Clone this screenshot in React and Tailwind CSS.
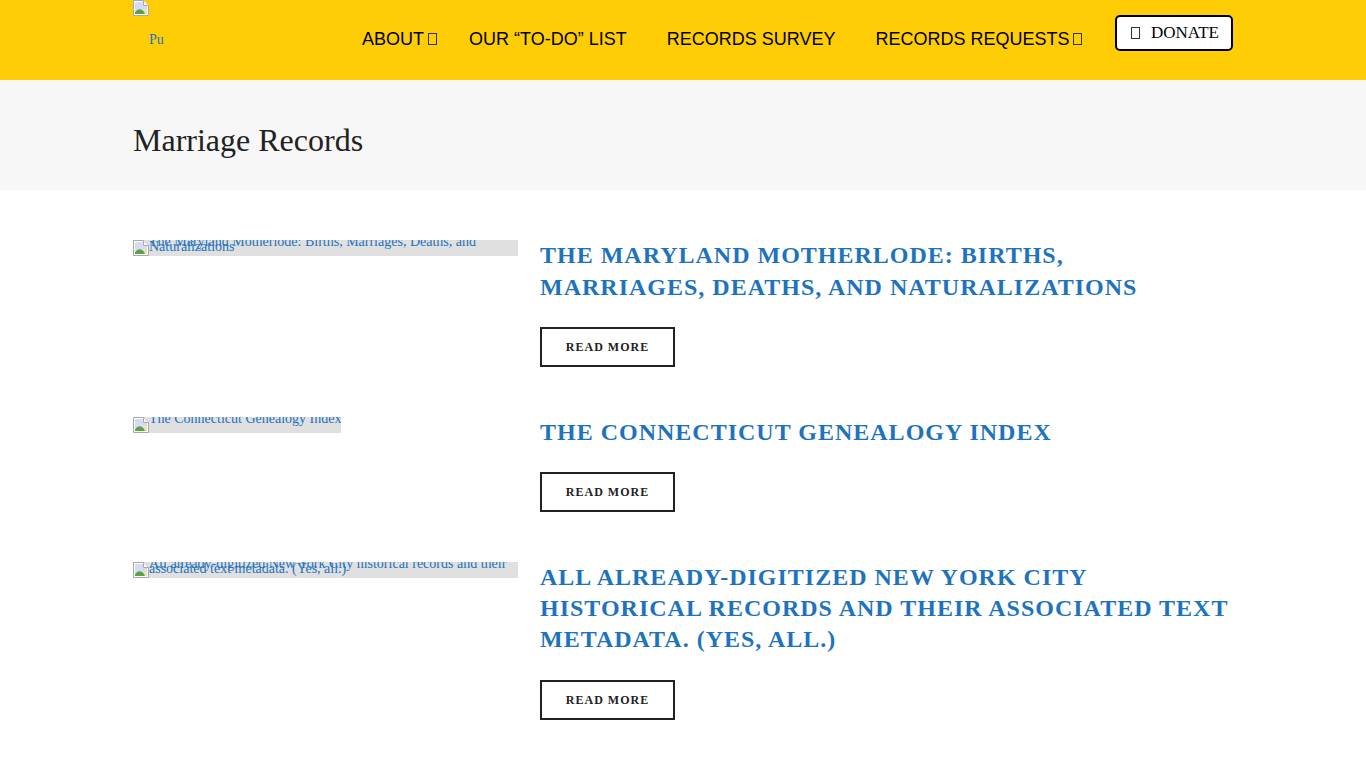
import React from 'react';

const serif = "font-['Liberation_Serif',serif]";
const sans = "font-['Liberation_Sans',Arial,sans-serif]";

function BrokenImage() {
  return (
    <svg width="16" height="16" viewBox="0 0 16 16" className="shrink-0 block">
      <path d="M0.5 0.5H10.5L15.5 5.5V15.5H0.5Z" fill="#ffffff" stroke="#a8a8a8" />
      <path d="M2 2H10V6H14V14H2Z" fill="#d6daf4" />
      <path d="M10.5 0.5V5.5H15.5" fill="#ffffff" stroke="#a8a8a8" />
      <path d="M7 14C8 10 11 8 14 9V14Z" fill="#e9e6b4" />
      <path d="M2 14V12.5C4 9.5 7 8.5 9 10C10.5 11 11.5 12.5 12 14Z" fill="#58a445" />
    </svg>
  );
}

// icon font glyph that never loaded, shows as an empty box
function MissingGlyph({ className }) {
  return <span className={`inline-block w-[9px] h-[12px] border border-[#333333] ${className}`} />;
}

function NavItem({ label, caret, className }) {
  return (
    <a className={`flex items-center text-[18px] leading-[26px] text-black whitespace-nowrap ${sans} ${className}`}>
      {label}
      {caret && <MissingGlyph className="ml-1" />}
    </a>
  );
}

function Post({ title, alt, imgWidth, altClass = '' }) {
  return (
    <div className="flex items-start mb-[50px]">
      <div className="w-[385px] shrink-0 mr-[22px]">
        <div className={`flex h-4 overflow-hidden bg-[#e0e0e0] ${imgWidth}`}>
          <BrokenImage />
          <span className={`-mt-px text-[14px] leading-[5px] text-[#1e73be] ${serif} ${altClass}`}>{alt}</span>
        </div>
      </div>
      <div className="flex-1">
        <h2 className={`text-[24px] leading-[31.2px] font-bold uppercase tracking-[1px] text-[#1e73be] mb-6 ${serif}`}>{title}</h2>
        <a className={`flex items-center justify-center w-[135px] h-10 border-2 border-[#222222] text-[12px] font-bold uppercase tracking-[1px] text-[#222222] ${serif}`}>
          Read more
        </a>
      </div>
    </div>
  );
}

export default function App() {
  return (
    <div className="bg-white">
      <header className="h-20 bg-[#ffcd05]">
        <div className="w-[1100px] mx-auto h-full flex items-start">
          <div className="w-[229px] shrink-0">
            <BrokenImage />
            <div className={`pl-4 mt-[15px] text-[14px] leading-[17px] text-[#1e73be] ${serif}`}>Pu</div>
          </div>
          <nav className="flex items-start pt-[26px]">
            <NavItem label="ABOUT" caret className="mr-8" />
            <NavItem label="OUR “TO-DO” LIST" className="mr-10" />
            <NavItem label="RECORDS SURVEY" className="mr-10" />
            <NavItem label="RECORDS REQUESTS" caret className="mr-8" />
          </nav>
          <a className={`ml-auto mt-[15px] flex items-center h-9 w-[118px] pl-[14px] bg-white border-2 border-black rounded-[5px] text-[17px] text-black ${serif}`}>
            <MissingGlyph className="mr-[11px]" />
            DONATE
          </a>
        </div>
      </header>

      <div className="h-[110.3px] bg-[#f7f7f7] flex items-center">
        <h1 className={`w-[1100px] mx-auto pt-[10px] text-[32px] leading-[40px] text-[#222222] ${serif}`}>Marriage Records</h1>
      </div>

      <main className="w-[1100px] mx-auto pt-[50px]">
        <Post
          title="The Maryland Motherlode: Births, Marriages, Deaths, and Naturalizations"
          alt="The Maryland Motherlode: Births, Marriages, Deaths, and Naturalizations"
          imgWidth="w-[385px]"
        />
        <Post
          title="The Connecticut Genealogy Index"
          alt="The Connecticut Genealogy Index"
          imgWidth="w-[208px]"
          altClass="whitespace-nowrap"
        />
        <Post
          title="All already-digitized New York City historical records and their associated text metadata. (Yes, all.)"
          alt="All already-digitized New York City historical records and their associated text metadata. (Yes, all.)"
          imgWidth="w-[385px]"
        />
      </main>
    </div>
  );
}
